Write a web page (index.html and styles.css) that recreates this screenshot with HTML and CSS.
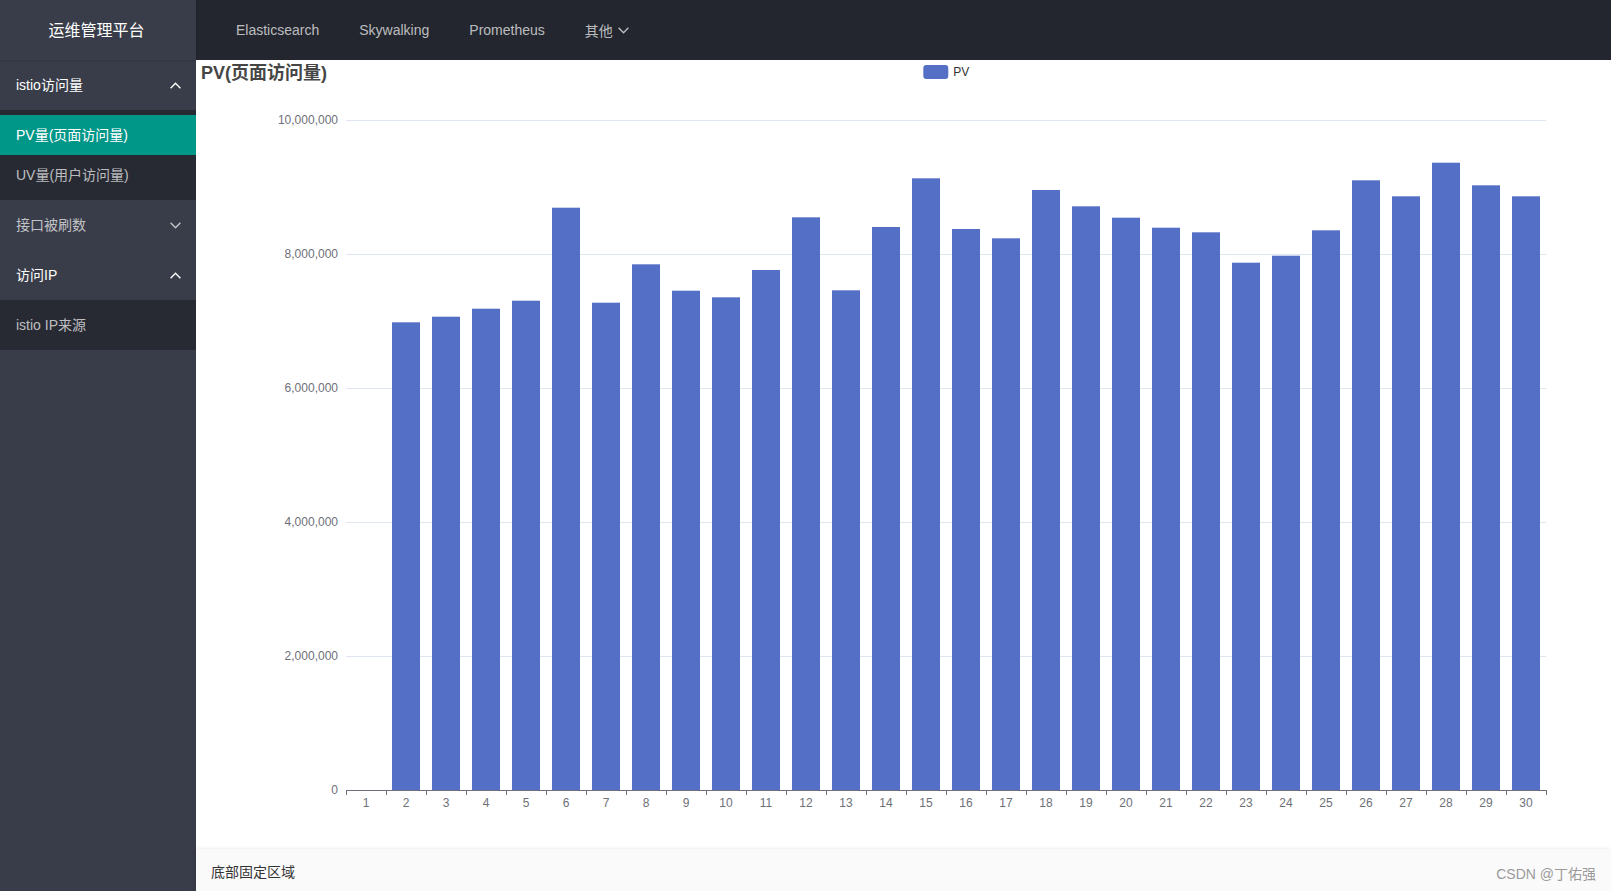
FILE: index.html
```html
<!DOCTYPE html>
<html lang="zh-CN">
<head>
<meta charset="utf-8">
<title>运维管理平台</title>
<link rel="stylesheet" href="styles.css">
</head>
<body>
<div class="app">
  <div class="logo">运维管理平台</div>
  <div class="topbar">
    <nav class="topnav">
      <a class="topnav-item">Elasticsearch</a>
      <a class="topnav-item">Skywalking</a>
      <a class="topnav-item">Prometheus</a>
      <a class="topnav-item">其他
        <svg class="chev-top" width="11" height="7" viewBox="0 0 11 7"><polyline points="0.6,0.8 5.5,5.8 10.4,0.8" fill="none" stroke="currentColor" stroke-width="1.3"/></svg>
      </a>
    </nav>
  </div>
  <aside class="side">
    <div class="nav-head open">
      <span>istio访问量</span>
      <svg class="chev" width="11" height="7" viewBox="0 0 11 7"><polyline points="0.6,6.2 5.5,1.2 10.4,6.2" fill="none" stroke="currentColor" stroke-width="1.4"/></svg>
    </div>
    <div class="nav-child">
      <a class="nav-link active">PV量(页面访问量)</a>
      <a class="nav-link">UV量(用户访问量)</a>
    </div>
    <div class="nav-head">
      <span>接口被刷数</span>
      <svg class="chev" width="11" height="7" viewBox="0 0 11 7"><polyline points="0.6,0.8 5.5,5.8 10.4,0.8" fill="none" stroke="currentColor" stroke-width="1.4"/></svg>
    </div>
    <div class="nav-head open">
      <span>访问IP</span>
      <svg class="chev" width="11" height="7" viewBox="0 0 11 7"><polyline points="0.6,6.2 5.5,1.2 10.4,6.2" fill="none" stroke="currentColor" stroke-width="1.4"/></svg>
    </div>
    <div class="nav-child">
      <a class="nav-link">istio IP来源</a>
    </div>
  </aside>
  <main class="main">
    <div class="chart">
      <svg class="chart-svg" width="1500" height="790" viewBox="0 0 1500 790">
        <text class="title" x="5" y="19">PV(页面访问量)</text>
        <rect x="727.3" y="5" width="25" height="14" rx="3" fill="#5470C6"/>
        <text class="legend" x="757.3" y="16.3">PV</text>
        <g class="split">
          <line x1="150" y1="60.5" x2="1350" y2="60.5"/>
          <line x1="150" y1="194.5" x2="1350" y2="194.5"/>
          <line x1="150" y1="328.5" x2="1350" y2="328.5"/>
          <line x1="150" y1="462.5" x2="1350" y2="462.5"/>
          <line x1="150" y1="596.5" x2="1350" y2="596.5"/>
        </g>
        <g class="ylab">
          <text x="142" y="64.3">10,000,000</text>
          <text x="142" y="198.3">8,000,000</text>
          <text x="142" y="332.3">6,000,000</text>
          <text x="142" y="466.3">4,000,000</text>
          <text x="142" y="600.3">2,000,000</text>
          <text x="142" y="734.3">0</text>
        </g>
        <g id="bars" fill="#5470C6"></g>
        <line class="axis" x1="150" y1="730.5" x2="1350" y2="730.5"/>
        <g id="ticks" class="axis"></g>
        <g id="xlab" class="xlab"></g>
      </svg>
    </div>
    <footer class="footer">
      <span>底部固定区域</span>
      <span class="watermark">CSDN @丁佑强</span>
    </footer>
  </main>
</div>
<script src="app.js"></script>
</body>
</html>
```
FILE: styles.css
```css
html, body {
  margin: 0;
  padding: 0;
  height: 100%;
  overflow: hidden;
}
body {
  font-family: "Liberation Sans", "Noto Sans CJK SC", sans-serif;
  font-size: 14px;
  color: #333;
  background: #fff;
}
.app {
  display: grid;
  grid-template-columns: 196px 1fr;
  grid-template-rows: 60px 1fr;
  height: 100vh;
}
.logo {
  position: relative;
  z-index: 2;
  background: #393D49;
  color: #fff;
  font-size: 16px;
  display: flex;
  align-items: center;
  justify-content: center;
  padding: 0 3px 3px 0;
  box-shadow: 0 1px 2px 0 rgba(0,0,0,.15);
}
.topbar {
  background: #23262E;
  display: flex;
  align-items: center;
}
.topnav {
  display: flex;
  padding-left: 20px;
  height: 100%;
}
.topnav-item {
  display: flex;
  align-items: center;
  padding: 0 20px;
  color: rgba(255,255,255,.7);
  cursor: pointer;
}
.chev-top {
  margin-left: 5px;
  margin-top: 1px;
}
.side {
  background: #393D49;
  display: flex;
  flex-direction: column;
}
.nav-head {
  height: 50px;
  display: flex;
  align-items: center;
  justify-content: space-between;
  padding: 0 15px 0 16px;
  color: rgba(255,255,255,.7);
}
.nav-head span {
  margin-bottom: 2px;
}
.nav-head.open {
  color: #fff;
}
.nav-child {
  background: rgba(0,0,0,.3);
  padding: 5px 0;
  display: flex;
  flex-direction: column;
}
.nav-link {
  height: 40px;
  line-height: 40px;
  padding: 0 16px;
  color: rgba(255,255,255,.7);
}
.nav-link.active {
  background: #009688;
  color: #fff;
}
.main {
  display: flex;
  flex-direction: column;
  min-width: 0;
  min-height: 0;
}
.chart {
  flex: 1;
  overflow: hidden;
  min-height: 0;
}
.chart-svg {
  display: block;
  font-family: "Liberation Sans", "Noto Sans CJK SC", sans-serif;
}
.title {
  font-size: 18px;
  font-weight: bold;
  fill: #464646;
}
.legend {
  font-size: 12px;
  fill: #333;
}
.split line {
  stroke: #E0E6F1;
  stroke-width: 1;
}
.ylab text {
  font-size: 12px;
  fill: #6E7079;
  text-anchor: end;
}
.axis, .axis line {
  stroke: #6E7079;
  stroke-width: 1;
}
.xlab text {
  font-size: 12px;
  fill: #6E7079;
  text-anchor: middle;
}
.footer {
  position: relative;
  z-index: 1;
  height: 42px;
  flex: none;
  background: #FAFAFA;
  box-shadow: -1px 0 4px rgba(0,0,0,.12);
  display: flex;
  align-items: center;
  justify-content: space-between;
  padding: 1px 15px 0;
  box-sizing: border-box;
  color: #333;
}
.watermark {
  color: #9a9a9a;
  padding-top: 4px;
}
```
FILE: app.js
```javascript
(function () {
  var NS = "http://www.w3.org/2000/svg";
  var tops = [null, 262.3, 256.7, 248.7, 240.7, 147.7, 242.7, 204.3, 230.7, 237.3,
    210, 157.3, 230.3, 167, 118.3, 169, 178.3, 130, 146.3, 157.7,
    167.7, 172.3, 202.7, 195.7, 170.3, 120.3, 136.3, 102.7, 125.3, 136.3];
  var bars = document.getElementById("bars");
  var ticks = document.getElementById("ticks");
  var xlab = document.getElementById("xlab");
  for (var i = 0; i < 30; i++) {
    if (tops[i] !== null) {
      var r = document.createElementNS(NS, "rect");
      r.setAttribute("x", 150 + 40 * i + 6);
      r.setAttribute("y", tops[i]);
      r.setAttribute("width", 28);
      r.setAttribute("height", 730 - tops[i]);
      bars.appendChild(r);
    }
    var t = document.createElementNS(NS, "text");
    t.setAttribute("x", 170 + 40 * i);
    t.setAttribute("y", 747);
    t.textContent = String(i + 1);
    xlab.appendChild(t);
  }
  for (var j = 0; j <= 30; j++) {
    var l = document.createElementNS(NS, "line");
    var x = 150.5 + 40 * j;
    l.setAttribute("x1", x);
    l.setAttribute("x2", x);
    l.setAttribute("y1", 730);
    l.setAttribute("y2", 735);
    ticks.appendChild(l);
  }
})();
```
